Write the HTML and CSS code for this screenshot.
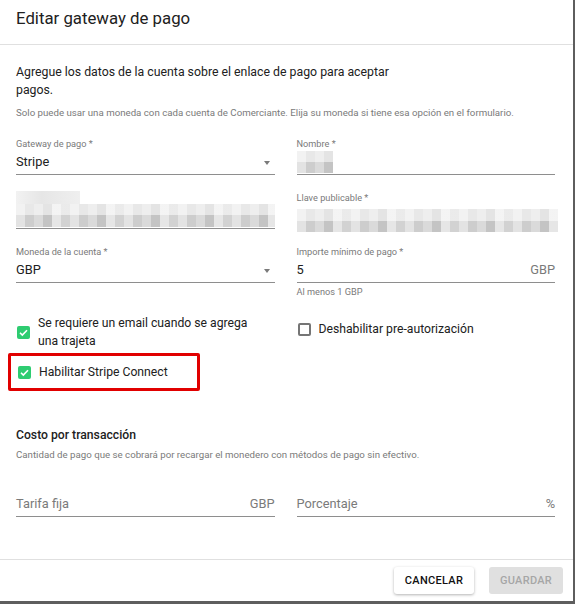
FILE: index.html
```html
<!DOCTYPE html>
<html lang="es">
<head>
  <meta charset="UTF-8">
  <title>Editar gateway de pago</title>
  <link rel="stylesheet" href="styles.css">
</head>
<body>
  <div class="dialog">
    <div class="dialog-header">
      <h1>Editar gateway de pago</h1>
    </div>

    <div class="dialog-content">
      <p class="intro">Agregue los datos de la cuenta sobre el enlace de pago para aceptar pagos.</p>
      <p class="note">Solo puede usar una moneda con cada cuenta de Comerciante. Elija su moneda si tiene esa opción en el formulario.</p>

      <div class="fields">
        <div class="field">
          <label>Gateway de pago *</label>
          <div class="value select">Stripe<span class="arrow"></span></div>
        </div>
        <div class="field">
          <label>Nombre *</label>
          <div class="value"><span class="pix pix-short"></span></div>
        </div>

        <div class="field">
          <label><span class="pix pix-label"></span></label>
          <div class="value"><span class="pix pix-long"></span></div>
        </div>
        <div class="field no-line">
          <label>Llave publicable *</label>
          <div class="value"><span class="pix pix-long pix-low"></span></div>
        </div>

        <div class="field">
          <label>Moneda de la cuenta *</label>
          <div class="value select">GBP<span class="arrow"></span></div>
        </div>
        <div class="field">
          <label>Importe mínimo de pago *</label>
          <div class="value">5<span class="suffix">GBP</span></div>
          <div class="hint">Al menos 1 GBP</div>
        </div>
      </div>

      <div class="checks">
        <div class="check">
          <span class="box checked"><svg viewBox="0 0 13 13"><path d="M3 6.8l2.3 2.3L10 4.3" /></svg></span>
          <span class="check-text wrap">Se requiere un email cuando se agrega una trajeta</span>
        </div>
        <div class="check check-top">
          <span class="box"></span>
          <span class="check-text">Deshabilitar pre-autorización</span>
        </div>
      </div>

      <div class="check highlight">
        <span class="box checked"><svg viewBox="0 0 13 13"><path d="M3 6.8l2.3 2.3L10 4.3" /></svg></span>
        <span class="check-text">Habilitar Stripe Connect</span>
      </div>

      <h2>Costo por transacción</h2>
      <p class="note">Cantidad de pago que se cobrará por recargar el monedero con métodos de pago sin efectivo.</p>

      <div class="fields fees">
        <div class="field">
          <div class="value placeholder">Tarifa fija<span class="suffix">GBP</span></div>
        </div>
        <div class="field">
          <div class="value placeholder">Porcentaje<span class="suffix">%</span></div>
        </div>
      </div>
    </div>

    <div class="dialog-footer">
      <button class="btn btn-cancel">Cancelar</button>
      <button class="btn btn-save" disabled>Guardar</button>
    </div>
  </div>
</body>
</html>
```

FILE: styles.css
```css
body {
  margin: 0;
  background: #5e5e5e;
  font-family: Roboto, "Liberation Sans", sans-serif;
  color: #212121;
}
.dialog {
  width: 573px;
  height: 601px;
  background: white;
  display: flex;
  flex-direction: column;
}
.dialog-header {
  height: 44px;
  padding-left: 16px;
  border-bottom: 1px solid #e0e0e0;
}
.dialog-header h1 {
  margin: 0;
  font-size: 16.8px;
  font-weight: 400;
  line-height: 37px;
}
.dialog-content {
  flex: 1;
  padding: 18px 18px 0 16px;
}
.intro {
  margin: 0;
  max-width: 400px;
  font-size: 12.3px;
  line-height: 18px;
}
.note {
  margin: 7px 0 0;
  font-size: 9.7px;
  line-height: 14px;
  color: #7a7a7a;
}
.fields {
  display: grid;
  grid-template-columns: 1fr 1fr;
  column-gap: 22px;
  row-gap: 17px;
  margin-top: 18px;
}
.field label {
  display: block;
  height: 12px;
  font-size: 9.2px;
  line-height: 12px;
  color: #7a7a7a;
}
.value {
  position: relative;
  margin-top: 3px;
  height: 18px;
  padding-bottom: 3px;
  border-bottom: 1px solid #8e8e8e;
  font-size: 12.8px;
  line-height: 18px;
}
.no-line .value {
  border-bottom-color: transparent;
}
.arrow {
  position: absolute;
  right: 5px;
  top: 8px;
  border-left: 3.5px solid transparent;
  border-right: 3.5px solid transparent;
  border-top: 4px solid #7a7a7a;
}
.suffix {
  position: absolute;
  right: 0;
  top: 0;
  color: #7a7a7a;
}
.placeholder {
  color: #7a7a7a;
}
.hint {
  margin-top: 3px;
  font-size: 9.2px;
  line-height: 12px;
  color: #7a7a7a;
}

/* pixelated blocks over private values */
.pix {
  position: absolute;
  left: 0;
  background:
    linear-gradient(to bottom, rgba(255,255,255,0.55) 0 50%, transparent 50%),
    repeating-linear-gradient(90deg, #e3e3e3 0 9px, #cdcdcd 9px 18px, #dadada 18px 27px, #c4c4c4 27px 36px, #e6e6e6 36px 45px, #d2d2d2 45px 54px);
}
.pix-short {
  width: 36px;
  top: -2px;
  height: 22px;
}
.pix-long {
  width: 100%;
  top: -3px;
  height: 23px;
}
.pix-low {
  top: 2px;
  width: 261px;
}
.pix-label {
  position: relative;
  display: block;
  width: 64px;
  height: 14px;
  top: -1px;
  background: linear-gradient(90deg, #f2f2f2, #e6e6e6 40%, #efefef);
}

.checks {
  display: grid;
  grid-template-columns: 1fr 1fr;
  column-gap: 22px;
  margin-top: 16px;
}
.check {
  display: flex;
  align-items: center;
  gap: 8px;
  font-size: 12.2px;
  line-height: 18px;
}
.check-top {
  align-self: start;
  margin-top: 6px;
}
.check-text.wrap {
  max-width: 225px;
}
.box {
  flex: none;
  width: 13px;
  height: 13px;
  margin-left: 1px;
  box-sizing: border-box;
  border: 2px solid #757575;
  border-radius: 2px;
}
.box.checked {
  border: none;
  background: #2ecc71;
}
.box svg {
  display: block;
  width: 13px;
  height: 13px;
  fill: none;
  stroke: white;
  stroke-width: 1.6;
}
.highlight {
  box-sizing: border-box;
  width: 192px;
  height: 38px;
  margin: 3px 0 0 -8px;
  padding: 0 6px;
  border: 3px solid #e10000;
  border-radius: 2px;
}

h2 {
  margin: 35px 0 0;
  font-size: 12.2px;
  font-weight: 500;
  line-height: 18px;
}
h2 + .note {
  margin-top: 4px;
}
.fees {
  margin-top: 30px;
}

.dialog-footer {
  display: flex;
  justify-content: flex-end;
  gap: 15px;
  padding: 7px 10px;
  border-top: 1px solid #e0e0e0;
}
.btn {
  height: 27px;
  border: none;
  border-radius: 3px;
  font-family: Roboto, "Liberation Sans", sans-serif;
  font-size: 11px;
  font-weight: 500;
  letter-spacing: 0.3px;
  text-transform: uppercase;
}
.btn-cancel {
  width: 80px;
  background: white;
  color: #111;
  box-shadow: 0 1px 3px rgba(0,0,0,0.3);
}
.btn-save {
  width: 74px;
  background: #e0e0e0;
  color: #a6a6a6;
}
```
